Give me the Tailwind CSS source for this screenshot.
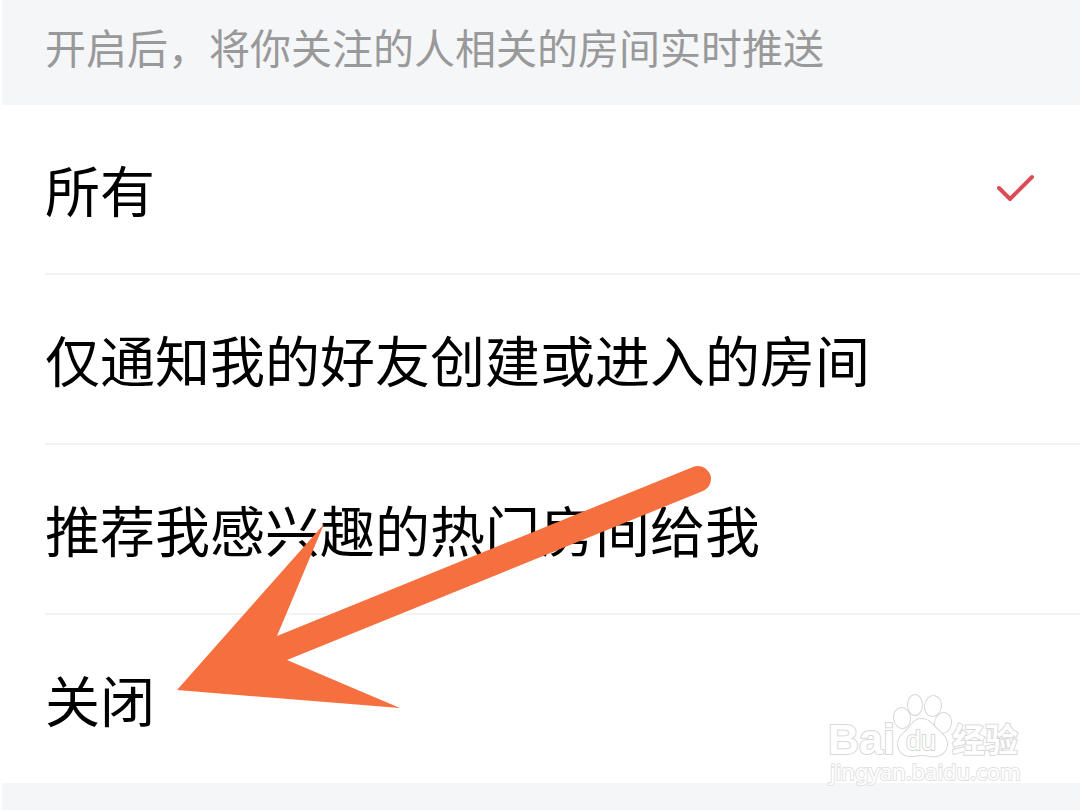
<!DOCTYPE html>
<html lang="zh-CN">
<head>
    <meta charset="UTF-8">
    <meta name="viewport" content="width=device-width, initial-scale=1.0">
    <title>房间推送设置</title>
    <script src="https://cdn.jsdelivr.net/npm/@tailwindcss/browser@4"></script>
</head>
<body class="min-h-screen bg-[#f5f6f8] border-l-2 border-white font-['Noto_Sans_CJK_SC',sans-serif]">
    <main class="relative">
        <form>
            <fieldset>
                <legend class="w-full pl-[43px] pt-4 pb-[29px] text-[41px] leading-[60px] text-[#999999]">开启后，将你关注的人相关的房间实时推送</legend>

                <div class="bg-white pl-[43px] text-[55px] leading-[80px] text-black">
                    <label class="flex items-center justify-between h-[170px] pr-11 pb-[2px] border-b-2 border-[#f3f3f4]">
                        <span>所有</span>
                        <input type="radio" name="push" value="all" class="peer sr-only" checked>
                        <svg class="hidden peer-checked:block w-10 h-8" viewBox="0 0 40 32" fill="none" stroke="#dc4c55" stroke-width="4" stroke-linecap="round" stroke-linejoin="round">
                            <path d="M3 16L14 27L36 5"/>
                        </svg>
                    </label>
                    <label class="flex items-center justify-between h-[170px] pr-11 pb-[2px] border-b-2 border-[#f3f3f4]">
                        <span>仅通知我的好友创建或进入的房间</span>
                        <input type="radio" name="push" value="friends" class="peer sr-only">
                    </label>
                    <label class="flex items-center justify-between h-[170px] pr-11 pb-[2px] border-b-2 border-[#f3f3f4]">
                        <span>推荐我感兴趣的热门房间给我</span>
                        <input type="radio" name="push" value="hot" class="peer sr-only">
                    </label>
                    <label class="flex items-center justify-between h-[168px] pr-11 pb-[2px]">
                        <span>关闭</span>
                        <input type="radio" name="push" value="off" class="peer sr-only">
                    </label>
                </div>
            </fieldset>
        </form>

        <!-- 指向“关闭”的箭头 -->
        <svg class="absolute left-[174px] top-[464px] w-[540px] h-[246px] pointer-events-none" viewBox="176 464 540 246" fill="#f66f3f" aria-hidden="true">
            <path d="M177 690L324 524L277 636L693 467C701 464 709 469 711 477C711 484 709 488 703 491L287 660L400 708Z"/>
        </svg>

        <!-- 水印 -->
        <svg class="absolute right-[50px] top-[690px] w-[210px] h-[100px] pointer-events-none" viewBox="820 690 210 100" fill="#ffffff" stroke="#d8d8d8" stroke-width="2" paint-order="stroke" aria-hidden="true">
            <text x="828" y="754" class="font-['Liberation_Sans',sans-serif] font-bold text-[43px]">Bai</text>
            <ellipse cx="902" cy="718" rx="8" ry="10" transform="rotate(-10 902 718)"/>
            <ellipse cx="915" cy="705" rx="7" ry="10"/>
            <ellipse cx="933" cy="706" rx="8" ry="10" transform="rotate(10 933 706)"/>
            <ellipse cx="943" cy="723" rx="8" ry="10" transform="rotate(12 943 723)"/>
            <path d="M921 719C914 719 912 725 908 729C903 734 898 737 898 744C898 751 903 756 910 756C915 756 918 755 922 755C927 755 930 757 936 756C943 755 947 750 947 744C947 737 942 734 937 729C932 724 929 719 921 719Z"/>
            <text x="906" y="750" class="font-['Liberation_Sans',sans-serif] text-[27px]">du</text>
            <text x="952" y="752" class="font-['Noto_Sans_CJK_SC',sans-serif] font-bold text-[33px]">经验</text>
            <text x="830" y="780" stroke="#e2e2e2" class="font-['Noto_Sans',sans-serif] text-[22px]">jingyan.baidu.com</text>
        </svg>
    </main>
</body>
</html>
